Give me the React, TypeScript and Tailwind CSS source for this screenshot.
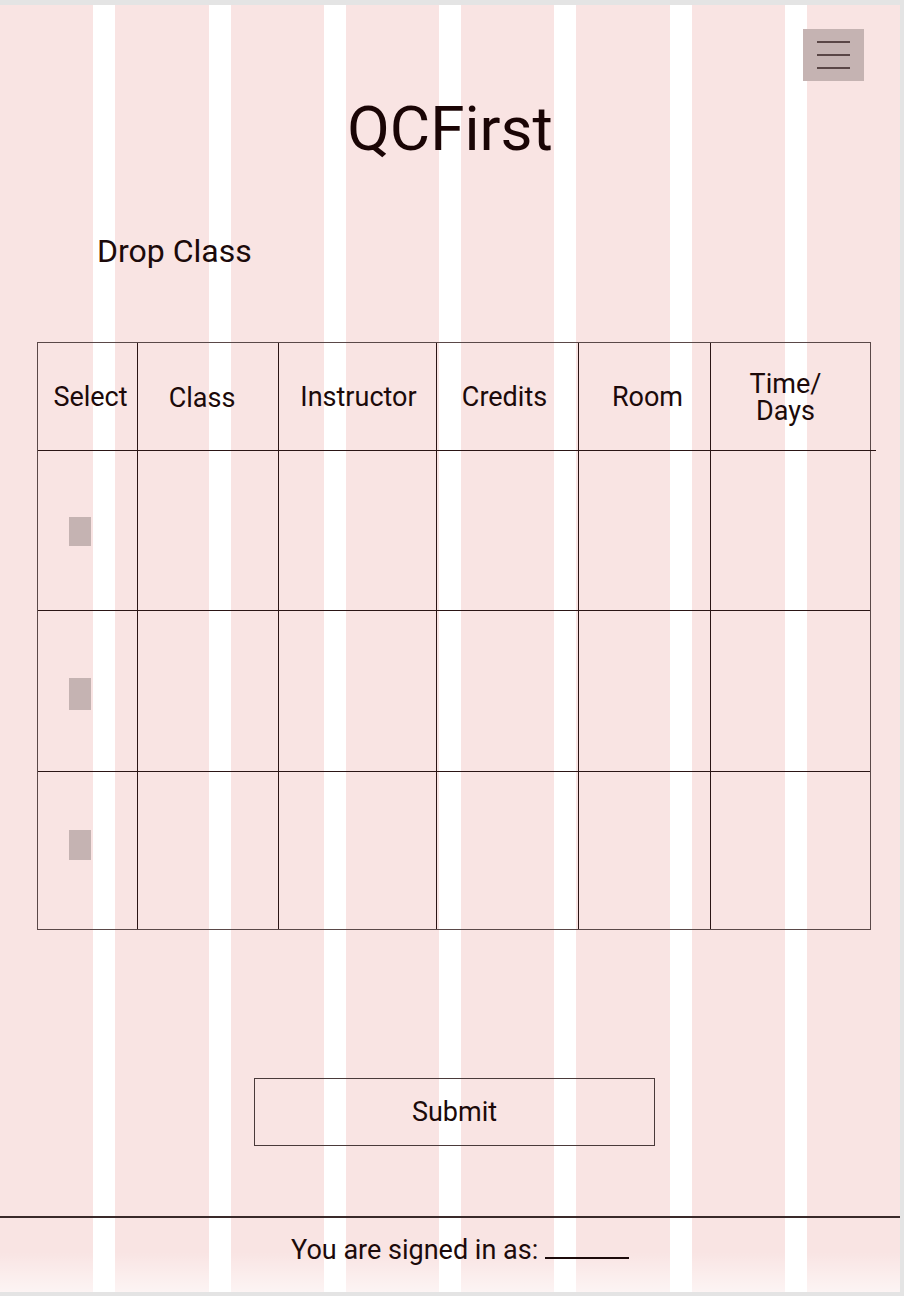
import { Fragment } from 'react';

const COLUMNS = ['Select', 'Class', 'Instructor', 'Credits', 'Room', 'Time/\nDays'];
// nudges so the header labels sit where the mockup has them
const HEADER_NUDGE = [
  'translate-x-[3px] translate-y-[1px]',
  '-translate-x-[6px] translate-y-[2px]',
  'translate-x-[1px] translate-y-[1px]',
  '-translate-x-[3px] translate-y-[1px]',
  'translate-x-[3px] translate-y-[1px]',
  '-translate-x-[5px] translate-y-[1px]',
];
const ROWS = [
  { h: 'h-[160px]', pad: 'pt-[66px]', box: 'h-[29px]' },
  { h: 'h-[161px]', pad: 'pt-[67px]', box: 'h-[32px]' },
  { h: 'h-[158px]', pad: 'pt-[58px]', box: 'h-[30px]' },
];
const ROBOTO = { fontFamily: 'Roboto, "Liberation Sans", sans-serif' };

function GridBackdrop() {
  return (
    <div className="absolute inset-0 grid grid-cols-8 gap-x-[22px]">
      {Array.from({ length: 8 }).map((_, i) => (
        <div key={i} className="bg-[#f9e4e3]" />
      ))}
    </div>
  );
}

function MenuButton() {
  return (
    <button className="w-[61px] h-[52px] bg-[#c5b3b2] flex flex-col items-center justify-center gap-[11px]">
      <span className="block w-[33px] h-[2px] bg-[#5a4646]" />
      <span className="block w-[33px] h-[2px] bg-[#5a4646]" />
      <span className="block w-[33px] h-[2px] bg-[#5a4646]" />
    </button>
  );
}

function DropTable() {
  return (
    <div className="ml-[37px] w-[834px] border border-[#5a4848] grid grid-cols-[99px_141px_158px_142px_132px_160px]">
      {COLUMNS.map((c, i) => (
        <div
          key={c}
          className={`relative h-[107px] flex items-center justify-center text-center text-[27px] leading-[27px] whitespace-pre-line text-[#1c0a0a] ${
            i > 0 ? 'border-l border-[#2b1515]' : ''
          }`}
        >
          <span className={HEADER_NUDGE[i]}>{c}</span>
          {i === COLUMNS.length - 1 && (
            <span className="absolute -right-[6px] -bottom-px w-[6px] h-px bg-[#2b1515]" />
          )}
        </div>
      ))}
      {ROWS.map((row, r) => (
        <Fragment key={r}>
          {COLUMNS.map((c, i) => (
            <div
              key={c}
              className={`${row.h} border-t border-[#2b1515] ${i > 0 ? 'border-l' : ''} ${
                i === 0 ? `pl-[31px] ${row.pad}` : ''
              }`}
            >
              {i === 0 && <span className={`block w-[22px] ${row.box} bg-[#c5b3b2]`} />}
            </div>
          ))}
        </Fragment>
      ))}
    </div>
  );
}

export default function App() {
  return (
    <div className="w-[904px] h-[1296px] bg-[#e4e4e4] pt-[5px]" style={ROBOTO}>
      <div className="relative w-[900px] h-[1287px] overflow-hidden bg-white">
        <GridBackdrop />
        <div className="absolute inset-x-0 bottom-0 h-[40px] bg-gradient-to-b from-transparent to-white/60" />

        <div className="relative flex flex-col text-[#1c0a0a]">
          <div className="flex justify-end pt-[24px] pr-[36px]">
            <MenuButton />
          </div>

          <h1 className="mt-[17px] text-center text-[62px] leading-none text-[#1a0505]">QCFirst</h1>

          <h2 className="mt-[75px] pl-[97px] text-[32px] leading-none">Drop Class</h2>

          <div className="mt-[75px]">
            <DropTable />
          </div>

          <button className="mt-[148px] ml-[254px] w-[401px] h-[68px] border border-[#4a3a3a] text-[27px] text-[#1c0a0a]">
            Submit
          </button>

          <div className="mt-[70px] h-[2px] w-[900px] bg-[#3a2a2a]" />

          <p className="mt-[19px] text-center text-[27px] leading-none pl-[20px]">
            You are signed in as: <span className="inline-block w-[84px] border-b-2 border-[#1c0a0a] align-baseline" />
          </p>
        </div>
      </div>
    </div>
  );
}
